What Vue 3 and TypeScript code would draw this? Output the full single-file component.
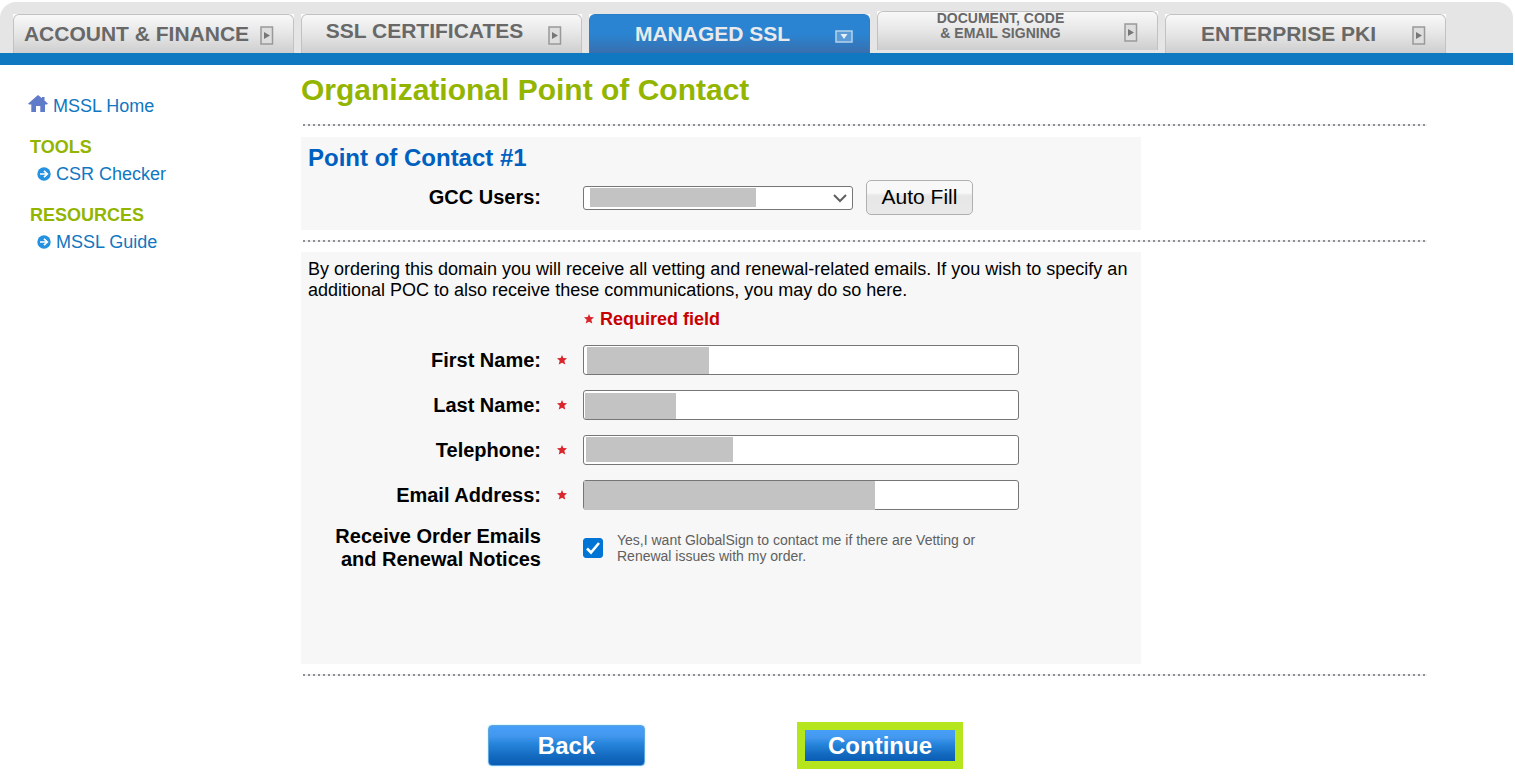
<script setup lang="ts">
import { ref } from 'vue'

interface Tab {
  lines: string[]
  active?: boolean
  variant?: 'high' | 'stacked'
}

interface Field {
  id: string
  label: string
  type: string
  mask: { left: number; top: number; width: number; height: number }
}

const tabs: Tab[] = [
  { lines: ['ACCOUNT & FINANCE'] },
  { lines: ['SSL CERTIFICATES'], variant: 'high' },
  { lines: ['MANAGED SSL'], active: true },
  { lines: ['DOCUMENT, CODE', '& EMAIL SIGNING'], variant: 'stacked' },
  { lines: ['ENTERPRISE PKI'] },
]

const groups = [
  { title: 'TOOLS', link: 'CSR Checker' },
  { title: 'RESOURCES', link: 'MSSL Guide' },
]

const fields: Field[] = [
  { id: 'first-name', label: 'First Name:', type: 'text', mask: { left: 4, top: 2, width: 122, height: 27 } },
  { id: 'last-name', label: 'Last Name:', type: 'text', mask: { left: 2, top: 3, width: 91, height: 26 } },
  { id: 'telephone', label: 'Telephone:', type: 'tel', mask: { left: 3, top: 2, width: 147, height: 25 } },
  { id: 'email', label: 'Email Address:', type: 'email', mask: { left: 1, top: 1, width: 291, height: 29 } },
]

const notices = ref(true)

function maskStyle(m: Field['mask']) {
  return { left: `${m.left}px`, top: `${m.top}px`, width: `${m.width}px`, height: `${m.height}px` }
}
</script>

<template>
  <div class="page">
    <header class="header">
      <nav class="tabs" aria-label="Sections">
        <div v-for="tab in tabs" :key="tab.lines[0]" class="tab-slot" :class="tab.variant">
          <a href="#" class="tab" :class="{ active: tab.active }">
            <span class="tab-label">
              <span v-for="line in tab.lines" :key="line" class="tab-line">{{ line }}</span>
            </span>
            <svg v-if="tab.active" class="tab-icon" width="18" height="20" viewBox="0 0 18 20" aria-hidden="true">
              <rect x="1" y="5" width="16" height="11" fill="#5b9bd6" stroke="#b4d3ee" stroke-width="1.5" />
              <path d="M5.5 8h7L9 13z" fill="#e6f0fa" />
            </svg>
            <svg v-else class="tab-icon" width="18" height="20" viewBox="0 0 18 20" aria-hidden="true">
              <rect x="2" y="1" width="11.5" height="17" fill="#dedede" stroke="#999" stroke-width="1.5" />
              <path d="M5 6v7l6-3.5z" fill="#777" />
            </svg>
          </a>
        </div>
      </nav>
    </header>

    <div class="body">
      <aside class="sidebar">
        <a href="#" class="home">
          <svg width="20" height="18" viewBox="0 0 20 18" aria-hidden="true">
            <path d="M10 0L14 3.3V2H16.5V5.5L20 8.7L18.8 9.5H17V17H12.3V11H8V17H3.3V9.5H1.2L0 8.7Z" fill="#5f7bc9" />
          </svg>
          <span>MSSL Home</span>
        </a>
        <section v-for="g in groups" :key="g.title" class="group">
          <h2>{{ g.title }}</h2>
          <a href="#" class="group-link">
            <svg width="14" height="14" viewBox="0 0 14 14" aria-hidden="true">
              <circle cx="7" cy="7" r="6.7" fill="#2492e0" />
              <path d="M3 7h7M7 3.8L10.3 7L7 10.2" fill="none" stroke="#fff" stroke-width="1.7" />
            </svg>
            <span>{{ g.link }}</span>
          </a>
        </section>
      </aside>

      <main class="main">
        <h1>Organizational Point of Contact</h1>
        <div class="rule"></div>

        <section class="panel users">
          <h2>Point of Contact #1</h2>
          <div class="row user-row">
            <label for="gcc-users">GCC Users:</label>
            <div class="control select-box">
              <select id="gcc-users"><option></option></select>
              <span class="mask select-mask"></span>
              <svg class="chevron" width="14" height="9" viewBox="0 0 14 9" aria-hidden="true">
                <path d="M1 1L7 7L13 1" fill="none" stroke="#606060" stroke-width="2" />
              </svg>
            </div>
            <button type="button" class="auto-fill">Auto Fill</button>
          </div>
        </section>

        <div class="rule"></div>

        <form class="panel details" @submit.prevent>
          <p class="intro">
            By ordering this domain you will receive all vetting and renewal-related emails. If you wish to specify an
            additional POC to also receive these communications, you may do so here.
          </p>
          <p class="required">
            <svg class="star" width="10" height="10" viewBox="0 0 10 10" aria-hidden="true">
              <path d="M5 0L6.3 3.1L10 3.3L7.3 5.8L8.3 9.5L5 7.7L1.7 9.5L2.7 5.8L0 3.3L3.7 3.1Z" fill="#d8262c" />
            </svg>
            <span>Required field</span>
          </p>
          <div class="rows">
            <div v-for="f in fields" :key="f.id" class="row">
              <label :for="f.id">{{ f.label }}</label>
              <svg class="star" width="10" height="10" viewBox="0 0 10 10" aria-hidden="true">
                <path d="M5 0L6.3 3.1L10 3.3L7.3 5.8L8.3 9.5L5 7.7L1.7 9.5L2.7 5.8L0 3.3L3.7 3.1Z" fill="#d8262c" />
              </svg>
              <div class="control field">
                <input :id="f.id" :type="f.type" required />
                <span class="mask" :style="maskStyle(f.mask)"></span>
              </div>
            </div>
            <div class="row">
              <label for="notices">Receive Order Emails<br />and Renewal Notices</label>
              <div class="consent">
                <span class="check">
                  <input id="notices" v-model="notices" type="checkbox" />
                  <svg v-if="notices" class="tick" width="20" height="20" viewBox="0 0 20 20" aria-hidden="true">
                    <path d="M4 10.5L8 14.5L16 5" fill="none" stroke="#fff" stroke-width="2.6" />
                  </svg>
                </span>
                <label for="notices" class="consent-text">Yes,I want GlobalSign to contact me if there are Vetting or<br />Renewal issues with my order.</label>
              </div>
            </div>
          </div>
        </form>

        <div class="rule"></div>

        <div class="actions">
          <button type="button" class="action back">Back</button>
          <button type="button" class="action continue">Continue</button>
        </div>
      </main>
    </div>
  </div>
</template>

<style>
body {
  background: #fff;
}
</style>

<style scoped>
.page {
  font-family: "Liberation Sans", Arial, sans-serif;
  font-size: 18px;
  color: #000;
  padding: 2px 2px 0 0;
}
.page * {
  box-sizing: border-box;
}
h1,
h2,
p {
  margin: 0;
}
a {
  color: #1077c1;
  text-decoration: none;
}
.header {
  background: #e5e5e5;
  border-bottom: 12px solid #1077c1;
  border-radius: 16px 16px 0 0;
  padding: 12px 12px 0 13px;
}
.tabs {
  display: flex;
  gap: 7px;
}
.tab-slot {
  width: 281px;
  height: 39px;
  background: #fff;
}
.tab-slot.stacked {
  margin-top: -3px;
  margin-bottom: 3px;
}
.tab {
  display: flex;
  align-items: center;
  height: 100%;
  padding-right: 16px;
  border: 1px solid #c2c2c2;
  border-width: 1px 1px 0;
  border-radius: 6px 6px 0 0;
  background: linear-gradient(#f8f8f8, #e6e6e6 50%, #cecece);
  color: #686868;
  font-size: 21px;
  font-weight: bold;
  line-height: 38px;
}
.tab.active {
  border-color: #2a7fcb;
  background: linear-gradient(#2b84d2 50%, #386fae);
  color: #e8eaec;
}
.tab-label {
  flex: 1;
  text-align: center;
}
.tab-line {
  display: block;
}
.high .tab-label {
  padding-bottom: 6px;
}
.high .tab-line {
  line-height: 32px;
}
.stacked .tab-label {
  font-size: 14px;
  padding-bottom: 10px;
}
.stacked .tab-line {
  line-height: 15px;
}
.tab-icon {
  flex: none;
  margin-top: 3px;
}
.body {
  display: flex;
  padding-right: 86px;
}
.sidebar {
  flex: none;
  width: 301px;
  padding: 29px 0 0 28px;
}
.home,
.group-link {
  display: flex;
  align-items: center;
  line-height: 24px;
}
.home {
  gap: 5px;
}
.home svg {
  margin-bottom: 4px;
}
.group {
  margin-top: 17px;
}
.group h2 {
  padding-left: 2px;
  font-size: 18px;
  line-height: 24px;
  color: #93b500;
}
.group-link {
  gap: 5px;
  padding: 3px 0 0 9px;
}
.main {
  flex: 1;
  min-width: 0;
}
h1 {
  font-size: 30px;
  line-height: 50px;
  height: 59px;
  color: #93b500;
}
.rule {
  height: 2px;
  margin-left: 2px;
  background: repeating-linear-gradient(90deg, #8e8e93 0 2px, #f0f0f2 2px 5px);
}
.panel {
  max-width: 840px;
  margin: 11px 0 10px;
  padding: 7px;
  background: #f7f7f7;
}
.users {
  padding-bottom: 15px;
}
.users h2 {
  font-size: 24px;
  line-height: 28px;
  color: #0060bf;
}
.row {
  display: grid;
  grid-template-columns: 233px 42px 1fr;
  align-items: center;
}
.row > label {
  grid-column: 1;
  text-align: right;
  font-size: 20px;
  line-height: 23px;
  font-weight: bold;
}
.row > .star {
  margin-left: 16px;
}
.control {
  position: relative;
  grid-column: 3;
}
.user-row {
  grid-template-columns: 233px 42px 270px auto;
  justify-content: start;
  margin-top: 8px;
}
.select-box,
select {
  height: 24px;
}
select,
.field input {
  display: block;
  width: 100%;
  appearance: none;
  margin: 0;
  border: 1px solid #767676;
  border-radius: 3px;
  background: #fff;
  font: inherit;
}
.mask {
  position: absolute;
  background: #c3c3c3;
}
.select-mask {
  left: 7px;
  top: 2px;
  width: 166px;
  height: 19px;
}
.chevron {
  position: absolute;
  right: 6px;
  top: 8px;
}
.auto-fill {
  width: 107px;
  height: 35px;
  margin-left: 13px;
  padding: 0 0 2px;
  border: 1px solid #b0b0b0;
  border-radius: 5px;
  background: linear-gradient(#f8f8f8 35%, #e6e6e6 45%, #e9e9e9);
  color: #000;
  font-family: inherit;
  font-size: 21px;
}
.intro {
  line-height: 21px;
}
.required {
  display: flex;
  align-items: center;
  gap: 6px;
  margin-top: 6px;
  padding-left: 276px;
  line-height: 24px;
  font-weight: bold;
  color: #c80000;
}
.rows {
  display: grid;
  gap: 15px;
  margin-top: 14px;
}
.field {
  max-width: 436px;
}
.field input {
  height: 30px;
  padding: 0 6px;
}
.details {
  margin-top: 10px;
  padding-bottom: 93px;
}
.consent {
  grid-column: 3;
  display: flex;
  align-items: center;
  gap: 14px;
}
.check {
  position: relative;
  display: block;
  height: 20px;
}
.check input {
  display: block;
  appearance: none;
  width: 20px;
  height: 20px;
  margin: 0;
  border: 1px solid #767676;
  border-radius: 3px;
  background: #fff;
}
.check input:checked {
  border-color: #0075d5;
  background: #0075d5;
}
.tick {
  position: absolute;
  left: 0;
  top: 0;
  pointer-events: none;
}
.consent-text {
  font-size: 14px;
  line-height: 16px;
  color: #606060;
}
.actions {
  display: flex;
  align-items: center;
  gap: 152px;
  margin-top: 46px;
  padding-left: 187px;
}
.action {
  padding: 0;
  color: #fff;
  font-family: inherit;
  font-size: 24px;
  font-weight: bold;
  background: linear-gradient(#489ff8, #4398ee 25%, #2785dc 45%, #1168bd 80%, #0a5cb5);
}
.back {
  width: 157px;
  height: 41px;
  border: 1px solid #5da6df;
  border-radius: 4px;
  box-shadow: 0 0 2px #a0e2ff;
}
.continue {
  width: 166px;
  height: 47px;
  border: 8px solid #b5e61d;
  background-clip: padding-box;
}
</style>
